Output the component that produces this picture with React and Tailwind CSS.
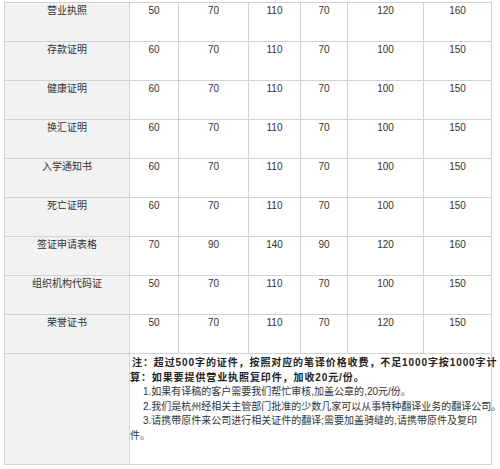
import React from "react";

const rows = [
  { name: "营业执照", v: [50, 70, 110, 70, 120, 160] },
  { name: "存款证明", v: [60, 70, 110, 70, 100, 150] },
  { name: "健康证明", v: [60, 70, 110, 70, 100, 150] },
  { name: "换汇证明", v: [60, 70, 110, 70, 100, 150] },
  { name: "入学通知书", v: [60, 70, 110, 70, 100, 150] },
  { name: "死亡证明", v: [60, 70, 110, 70, 100, 150] },
  { name: "签证申请表格", v: [70, 90, 140, 90, 120, 160] },
  { name: "组织机构代码证", v: [50, 70, 110, 70, 100, 150] },
  { name: "荣誉证书", v: [50, 70, 110, 70, 120, 150] },
];

const widths = ["w-[49px]", "w-[70px]", "w-[52px]", "w-[47px]", "w-[76px]", "w-[68px]"];

const App = () => {
  return (
    <div
      className="w-[500px] h-[469px] bg-white overflow-hidden pt-[2px] pl-[4px] text-[#333] text-[10px]"
      style={{ fontFamily: '"Liberation Sans", "Noto Sans CJK SC", sans-serif' }}
    >
      <table className="border-collapse table-fixed w-[488px]">
        <colgroup>
          <col className="w-[125px]" />
          {widths.map((w, i) => (
            <col key={i} className={w} />
          ))}
        </colgroup>
        <tbody>
          {rows.map((row) => (
            <tr key={row.name} className="h-[39px]">
              <td className="border border-[#d2d2d2] bg-[#f2f2f2] align-top text-center pt-[1px] leading-[14px]">
                {row.name}
              </td>
              {row.v.map((n, i) => (
                <td
                  key={i}
                  className="border border-[#d2d2d2] bg-white align-top text-center pt-[1px] leading-[14px]"
                >
                  {n}
                </td>
              ))}
            </tr>
          ))}
          <tr className="h-[111px]">
            <td className="border border-[#d2d2d2] bg-[#f2f2f2]"></td>
            <td
              colSpan={6}
              className="border border-[#d2d2d2] bg-white align-top pt-[2px] leading-[14.5px] whitespace-nowrap"
            >
              <div className="font-bold text-[#222] pl-[2px] tracking-[0.9px]">
                注：超过500字的证件，按照对应的笔译价格收费，不足1000字按1000字计
              </div>
              <div className="font-bold text-[#222] tracking-[0.9px]">
                算：如果要提供营业执照复印件，加收20元/份。
              </div>
              <div className="pl-[13px]">1.如果有译稿的客户需要我们帮忙审核,加盖公章的,20元/份。</div>
              <div className="pl-[13px]">2.我们是杭州经相关主管部门批准的少数几家可以从事特种翻译业务的翻译公司。</div>
              <div className="pl-[13px]">3.请携带原件来公司进行相关证件的翻译;需要加盖骑缝的,请携带原件及复印</div>
              <div>件。</div>
            </td>
          </tr>
        </tbody>
      </table>
    </div>
  );
};

export default App;
